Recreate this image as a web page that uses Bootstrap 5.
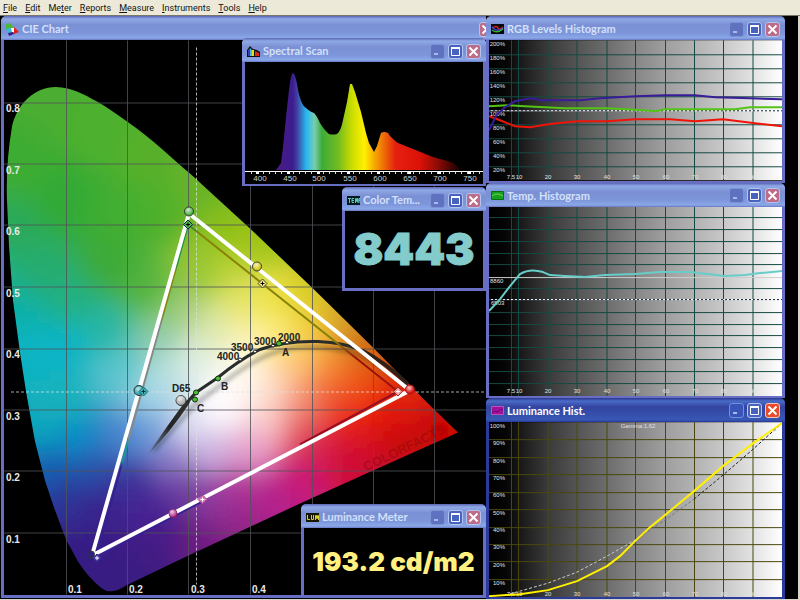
<!DOCTYPE html>
<html lang="en">
<head>
<meta charset="utf-8">
<meta name="viewport" content="width=device-width, initial-scale=1">
<title>Color Analyzer</title>
<link href="https://cdn.jsdelivr.net/npm/bootstrap@5.3.0/dist/css/bootstrap.min.css" rel="stylesheet">
<style>
  body { background: #000; font-family: Roboto, "Liberation Sans", sans-serif; font-size: 9px; line-height: 14px; }
  .menu-strip { background: #ece9d8; border-bottom: 1px solid #77756c; height: 16px; padding-left: 3px; gap: 8px; flex: none; }
  .menu-strip a { color: #111; }
  .desk { background: #000; border-right: 2px solid #d8d6cc; border-bottom: 1px solid #d8d6cc; }
  .pane-main { flex: 486 1 0; }
  .pane-side { flex: 299 1 0; padding-right: 13px; }
  .win { background: #000; border: solid #686ec4; border-width: 0 3px 2px; border-radius: 6px 6px 0 0; }
  .win-bar { height: 24px; flex: none; margin: 0 -3px; padding: 2px 5px 0; gap: 3px; border-radius: 5px 5px 0 0;
    background: linear-gradient(#5a66b4, #8fa9e6 3px, #7b90d4 9px, #7d95da 17px, #8aa8e8 22px, #6a76c4); }
  .win-name { color: #d3e0fa; font: 700 11px/16px Lato, sans-serif; white-space: nowrap; }
  .win-bar svg { flex: none; }
  .win-active { border-color: #2c3a9c; }
  .win-active .win-bar { background: linear-gradient(#2a3488, #4a6cc8 3px, #3344a0 9px, #3450ac 17px, #3858b4 22px, #26349a); }
  .win-active .win-name { color: #fff; }
  .ctl { width: 15px; height: 15px; padding: 0; border: 1px solid #b4c4f0; border-radius: 3px; background: #4763bd; display: flex; }
  .ctl-min { background: #5f72bf; border-color: #7c92d8; }
  .ctl-close { background: #bc6c88; }
  .win-active .ctl-min { background: #3854b8; border-color: #6f90dc; }
  .win-active .ctl-close { background: #e84c28; border-color: #f0c8c0; }
  .ctl-set { gap: 3px; }
  .win-chart { border-bottom-width: 3px; margin: 0 -13px 1px 1px; }
  .plot { flex: 1 1 0; min-height: 0; width: 100%; display: block; }
  .at-spectral { left: 242px; right: 0; top: 22px; }
  .at-temp { left: 342px; right: 0; top: 171px; }
  .at-lum { left: 301px; right: 0; bottom: 1px; }
  .read-temp { color: #84cccc; font: 900 44px/77px Inter, sans-serif; -webkit-text-stroke: 1px #84cccc; }
  .read-lum { color: #fff080; font: 900 26px/67px Inter, sans-serif; }
  .at-temp, .at-lum { border-bottom-width: 3px; }
  svg text { font-family: "Liberation Sans", Arial, sans-serif; }
  .axis-txt { font-size: 10px; font-weight: 700; fill: #e8e8e8; }
  .locus-txt { font-size: 10px; font-weight: 700; fill: #222; }
  .wave-txt { font-size: 8px; fill: #d0d0d0; text-anchor: middle; }
  .tiny-txt { font-size: 6px; font-weight: 400; fill: #e0e0e0; }
</style>
<script src="https://cdn.jsdelivr.net/npm/bootstrap@5.3.0/dist/js/bootstrap.bundle.min.js"></script>
</head>
<body class="d-flex flex-column min-vh-100 m-0">

<svg width="0" height="0" class="position-absolute" aria-hidden="true">
  <defs>
    <symbol id="g-min" viewBox="0 0 13 13"><path d="M3 9h4" stroke="#a9b9ec" stroke-width="2"/></symbol>
    <symbol id="g-max" viewBox="0 0 13 13"><path d="M2.500 3v7.500h8V3z" fill="none" stroke="#fff"/><path d="M2 3h9" stroke="#fff" stroke-width="2"/></symbol>
    <symbol id="g-close" viewBox="0 0 13 13"><path d="M2.500 2.500l8 8M10.500 2.500l-8 8" stroke="#fff" stroke-width="2"/></symbol>
    <linearGradient id="ramp">
      <stop offset="0" stop-color="#000"/><stop offset=".06" stop-color="#060606"/>
      <stop offset=".1" stop-color="#161616"/><stop offset=".2" stop-color="#3a3a3a"/>
      <stop offset=".3" stop-color="#545454"/><stop offset=".4" stop-color="#6c6c6c"/>
      <stop offset=".5" stop-color="#868686"/><stop offset=".6" stop-color="#9e9e9e"/>
      <stop offset=".7" stop-color="#b2b2b2"/><stop offset=".8" stop-color="#c8c8c8"/>
      <stop offset=".9" stop-color="#e2e2e2"/><stop offset="1" stop-color="#fff"/>
    </linearGradient>
  </defs>
</svg>

<nav class="menu-strip d-flex align-items-center" aria-label="Menu">
  <a class="text-decoration-none" href="#"><u>F</u>ile</a>
  <a class="text-decoration-none" href="#"><u>E</u>dit</a>
  <a class="text-decoration-none" href="#">Me<u>t</u>er</a>
  <a class="text-decoration-none" href="#"><u>R</u>eports</a>
  <a class="text-decoration-none" href="#"><u>M</u>easure</a>
  <a class="text-decoration-none" href="#"><u>I</u>nstruments</a>
  <a class="text-decoration-none" href="#"><u>T</u>ools</a>
  <a class="text-decoration-none" href="#"><u>H</u>elp</a>
</nav>

<main class="desk d-flex flex-grow-1">
  <div class="pane-main position-relative overflow-hidden d-flex">

    <section class="win win-chart d-flex flex-column flex-grow-1">
      <header class="win-bar d-flex align-items-center">
        <svg width="13" height="13" viewBox="0 0 13 13"><path d="M0 1l4-1 4 5-3 2-5-1z" fill="#4cb838"/><path d="M0 6l5-1 1 4-4 1z" fill="#38b8d8"/><path d="M5 5l4 0 1 4-4 0z" fill="#fff"/><path d="M8 4l5 5-5 2z" fill="#e42018"/><path d="M2 10l5-1 1 2-5 2z" fill="#342088"/></svg>
        <span class="win-name">CIE Chart</span>
        <span class="ctl-set d-flex ms-auto"><button class="ctl ctl-close" type="button" aria-label="Close"><svg width="13" height="13"><use href="#g-close"/></svg></button></span>
      </header>
      <svg class="plot" viewBox="4 40 492 554" role="img" aria-label="CIE chromaticity chart">
        <defs>
          <clipPath id="gamut"><path d="M7 200C6 175 8 150 12 126C17 104 34 86.500 56 86.500C72 87 84 94 97 101C108 107 117 114 127 121C152 138 172 158 190 173L250 228L313 288L373 347L425 400L458 432L373 470L300 503L240 531L180 559L126 585Q111 595 102 588Q88 577 78 561L66 539L54 507L45 480L35 441L26 391L20 352L13 300L9 245Z"/></clipPath>
          <filter id="soft" x="0" y="0" width="1" height="1"><feGaussianBlur stdDeviation="11"/></filter>
          <filter id="shade" x="-10%" y="-10%" width="120%" height="120%"><feGaussianBlur stdDeviation="2"/></filter>
          <linearGradient id="edgeL" gradientUnits="userSpaceOnUse" x1="188" y1="224" x2="96" y2="557">
            <stop offset="0" stop-color="#1a9040"/><stop offset=".12" stop-color="#1a9040"/><stop offset=".14" stop-color="#8a8410"/><stop offset=".26" stop-color="#8a8410"/><stop offset=".3" stop-color="#888"/><stop offset=".64" stop-color="#888"/><stop offset=".66" stop-color="#189890"/><stop offset=".71" stop-color="#189890"/><stop offset=".73" stop-color="#342090"/><stop offset="1" stop-color="#342090"/>
          </linearGradient>
          <linearGradient id="edgeR" gradientUnits="userSpaceOnUse" x1="188" y1="224" x2="398" y2="391">
            <stop offset="0" stop-color="#1a9040"/><stop offset=".06" stop-color="#8a8008"/><stop offset=".7" stop-color="#848008"/><stop offset=".8" stop-color="#981008"/><stop offset="1" stop-color="#a01010"/>
          </linearGradient>
          <linearGradient id="tail" gradientUnits="userSpaceOnUse" x1="148" y1="453" x2="190" y2="400"><stop offset="0" stop-color="#444" stop-opacity=".3"/><stop offset=".5" stop-color="#222"/><stop offset="1" stop-color="#333"/></linearGradient>
          <radialGradient id="gloss" cx=".4" cy=".3" r=".6"><stop offset="0" stop-color="#fff" stop-opacity=".75"/><stop offset="1" stop-color="#fff" stop-opacity="0"/></radialGradient>
        </defs>
        <g clip-path="url(#gamut)"><g id="hues" filter="url(#soft)"></g></g>
        <path d="M66.500 40V594M127.500 40V594M188.500 40V594M250.500 40V594M312.500 40V594M373.500 40V594M434.500 40V594M4 102.500H496M4 163.500H496M4 224.500H496M4 286.500H496M4 348.500H496M4 409.500H496M4 470.500H496M4 532.500H496" stroke="#505358" stroke-opacity=".8" fill="none"/>
        <path d="M196.500 47V584M11 391.500H490" stroke="#e0e0e0" stroke-opacity=".75" stroke-dasharray="3 2" fill="none"/>
        <text transform="translate(366 471) rotate(-26)" font-size="13" font-weight="700" fill="#900808" fill-opacity=".5">COLORFACTS</text>

        <path d="M154 450L194 405L224 382Q258 355 284 349Q314 343 354 352Q384 364 408 387" stroke="#000" stroke-opacity=".3" stroke-width="4" fill="none" filter="url(#shade)"/>
        <path d="M148 454Q168 424 186 400L190 402Q170 432 148 454Z" fill="url(#tail)"/>
        <path d="M187 402L196 392L218 377Q240 359 260 349Q286 340 318 341Q344 342 362 350" stroke="#282c2c" stroke-width="3" fill="none"/>
        <path d="M362 350Q386 362 408 384" stroke="#302018" stroke-width="4" fill="none"/>
        <path d="M188 224L96 557" stroke="url(#edgeL)" stroke-width="2"/>
        <path d="M188 224L398 391" stroke="url(#edgeR)" stroke-width="2"/>
        <path d="M98 556L202 501" stroke="#382090" stroke-width="2"/><path d="M300 444L398 391" stroke="#981020" stroke-width="2"/>
        <path d="M189 213L410 390L92 555Z" stroke="#fff" stroke-width="4" stroke-linejoin="round" fill="none"/>

        <g stroke="#333" stroke-width="1">
          <circle cx="189" cy="211" r="4.500" fill="#50b048"/><circle cx="257" cy="266" r="4.500" fill="#d8c810"/>
          <circle cx="410" cy="389" r="4.500" fill="#d81818" stroke="#a01010"/><circle cx="139" cy="390" r="5" fill="#30a8b0"/>
          <circle cx="173" cy="513" r="4" fill="#b83090" stroke="#802060"/><circle cx="91" cy="554" r="3.500" fill="#302080"/>
          <circle cx="181" cy="400" r="5" fill="#aaa"/>
        </g>
        <g fill="url(#gloss)"><circle cx="189" cy="211" r="4"/><circle cx="257" cy="266" r="4"/><circle cx="410" cy="389" r="4"/><circle cx="139" cy="390" r="4"/><circle cx="173" cy="513" r="4"/><circle cx="181" cy="400" r="5"/></g>
        <g stroke-width="1">
          <path d="M188 219.500l4.500 4.500-4.500 4.500-4.500-4.500z" fill="#50b850" stroke="#124"/><path d="M186 224h4M188 222v4" stroke="#000"/>
          <path d="M262.500 278.500l4.500 4.500-4.500 4.500-4.500-4.500z" fill="#f4ec80" stroke="#443"/><path d="M260.500 283h4M262.500 281v4" stroke="#000"/>
          <path d="M398 386.500l4.500 4.500-4.500 4.500-4.500-4.500z" fill="#f09090" stroke="#a03030"/><path d="M396 391h4M398 389v4" stroke="#fff"/>
          <path d="M143.500 386.500l4.500 4.500-4.500 4.500-4.500-4.500z" fill="#40b0b0" stroke="#267"/><path d="M141.500 391h4M143.500 389v4" stroke="#033"/>
          <path d="M202.500 494.500l4.500 4.500-4.500 4.500-4.500-4.500z" fill="#d878b8" stroke="#a04088"/><path d="M200.500 499h4M202.500 497v4" stroke="#fff"/>
          <path d="M97 553.500l4 4-4 4-4-4z" fill="#4838a0" stroke="#383090"/><path d="M95 557.500h4M97 555.500v4" stroke="#fff"/>
        </g>
        <g fill="#48c030" stroke="#103010"><circle cx="196" cy="392" r="2.500"/><circle cx="195" cy="399" r="2.500"/><circle cx="218" cy="378" r="2.500"/><circle cx="279" cy="343" r="2.500"/></g>
        <g fill="#fff" stroke="#222"><circle cx="287" cy="342" r="1.500"/><circle cx="273" cy="345" r="1.500"/><circle cx="255" cy="351" r="1.500"/><circle cx="240" cy="359" r="1.500"/></g>
        <g class="locus-txt"><text x="278" y="340">2000</text><text x="254" y="344">3000</text><text x="231" y="350">3500</text><text x="217" y="359">4000</text><text x="282" y="355">A</text><text x="221" y="389">B</text><text x="197" y="411">C</text><text x="172" y="391">D65</text></g>
        <g class="axis-txt">
          <text x="6" y="111">0.8</text><text x="6" y="173">0.7</text><text x="6" y="234">0.6</text><text x="6" y="296">0.5</text><text x="6" y="357">0.4</text><text x="6" y="419">0.3</text><text x="6" y="480">0.2</text><text x="6" y="542">0.1</text>
          <text x="68" y="592">0.1</text><text x="129" y="592">0.2</text><text x="191" y="592">0.3</text><text x="252" y="592">0.4</text>
        </g>
      </svg>
    </section>

    <section class="win at-spectral position-absolute d-flex flex-column">
      <header class="win-bar d-flex align-items-center">
        <svg width="13" height="11" viewBox="0 0 13 11"><path d="M0 11V4L3 0l3 3 4 1 3 2v5z" fill="#111"/><path d="M1 10V4l2-2v8z" fill="#4038b0"/><path d="M3 2l2 2v6H3z" fill="#40b8e0"/><path d="M5 4h2v6H5z" fill="#e8e020"/><path d="M8 5l4 2v3H8z" fill="#e02818"/></svg>
        <span class="win-name">Spectral Scan</span>
        <span class="ctl-set d-flex ms-auto"><button class="ctl ctl-min" type="button" aria-label="Minimize"><svg width="13" height="13"><use href="#g-min"/></svg></button><button class="ctl" type="button" aria-label="Maximize"><svg width="13" height="13"><use href="#g-max"/></svg></button><button class="ctl ctl-close" type="button" aria-label="Close"><svg width="13" height="13"><use href="#g-close"/></svg></button></span>
      </header>
      <svg class="w-100 d-block" viewBox="245 62 238 122" role="img" aria-label="Spectral power">
        <defs><linearGradient id="spec" gradientUnits="userSpaceOnUse" x1="276" y1="0" x2="460" y2="0">
          <stop offset="0" stop-color="#4a1a80"/><stop offset=".09" stop-color="#3c1c90"/><stop offset=".11" stop-color="#40389c"/><stop offset=".165" stop-color="#28b8f0"/><stop offset=".21" stop-color="#78ccb0"/><stop offset=".25" stop-color="#3cac38"/><stop offset=".34" stop-color="#74bc20"/><stop offset=".41" stop-color="#c8dc00"/><stop offset=".48" stop-color="#fff000"/><stop offset=".53" stop-color="#f8b000"/><stop offset=".6" stop-color="#ec5c08"/><stop offset=".65" stop-color="#e42010"/><stop offset=".78" stop-color="#dc1208"/><stop offset=".88" stop-color="#8c0c04"/><stop offset="1" stop-color="#180000"/>
        </linearGradient></defs>
        <path d="M276 170L281 163L283 147L286 117L289 90Q291 73 293 73Q295 74 297 84Q299 98 303 105Q307 110 314 113Q317 116 320 123Q325 131 329 134Q333 135 337 134Q341 131 343 120L347 102L350 84H352L355 92L361 112L366 133L369 143L374 152L377 146L381 133Q384 131 388 133Q391 138 398 143L413 149L433 157L451 162Q456 164 460 170Z" fill="url(#spec)"/>
        <path d="M245 171.500H483" stroke="#fff"/>
        <path id="waveTicks" stroke="#ddd"/>
        <path d="M256 173h3M287 173h3M317 173h3M347 173h3M377 173h3M408 173h3M438 173h3M468 173h3" stroke="#fff" stroke-width="2"/>
        <g class="wave-txt"><text x="260" y="181">400</text><text x="290" y="181">450</text><text x="319" y="181">500</text><text x="350" y="181">550</text><text x="380" y="181">600</text><text x="410" y="181">650</text><text x="440" y="181">700</text><text x="470" y="181">750</text></g>
      </svg>
    </section>

    <section class="win at-temp position-absolute d-flex flex-column">
      <header class="win-bar d-flex align-items-center">
        <svg width="13" height="9" viewBox="0 0 13 9"><path d="M0 0h13v9H0z" fill="#021c1c"/><path d="M1 2.500h3M2.500 2v5M7 2.500H5v4h2M5 4.500h2M8.500 7V2.500h1v3h1v-3h.500V7M12 7V2.500h1v2h-1" stroke="#58c8c0" fill="none"/></svg>
        <span class="win-name">Color Tem...</span>
        <span class="ctl-set d-flex ms-auto"><button class="ctl ctl-min" type="button" aria-label="Minimize"><svg width="13" height="13"><use href="#g-min"/></svg></button><button class="ctl" type="button" aria-label="Maximize"><svg width="13" height="13"><use href="#g-max"/></svg></button><button class="ctl ctl-close" type="button" aria-label="Close"><svg width="13" height="13"><use href="#g-close"/></svg></button></span>
      </header>
      <output class="read-temp text-center d-block">8443</output>
    </section>

    <section class="win at-lum position-absolute d-flex flex-column">
      <header class="win-bar d-flex align-items-center">
        <svg width="13" height="9" viewBox="0 0 13 9"><path d="M0 0h13v9H0z" fill="#181800"/><path d="M1.500 2v4.500H4M5.500 2v4.500h2V2M9.500 7V2.500h1v3h1v-3h1V7" stroke="#d8d030" fill="none"/></svg>
        <span class="win-name">Luminance Meter</span>
        <span class="ctl-set d-flex ms-auto"><button class="ctl ctl-min" type="button" aria-label="Minimize"><svg width="13" height="13"><use href="#g-min"/></svg></button><button class="ctl" type="button" aria-label="Maximize"><svg width="13" height="13"><use href="#g-max"/></svg></button><button class="ctl ctl-close" type="button" aria-label="Close"><svg width="13" height="13"><use href="#g-close"/></svg></button></span>
      </header>
      <output class="read-lum text-center text-nowrap d-block">193.2 cd/m2</output>
    </section>
  </div>

  <div class="pane-side d-flex flex-column">
    <section class="win d-flex flex-column" style="flex: 166 1 0">
      <header class="win-bar d-flex align-items-center">
        <svg width="13" height="10" viewBox="0 0 13 10"><path d="M0 0h13v10H0z" fill="#080808"/><path d="M1 4q5-3 6 0t5-1" stroke="#e02020" stroke-width="1.500" fill="none"/><path d="M1 3q5 6 11 1" stroke="#4040d0" stroke-width="1.500" fill="none"/><path d="M1 6q5 4 11-1" stroke="#30b030" stroke-width="1.500" fill="none"/></svg>
        <span class="win-name">RGB Levels Histogram</span>
        <span class="ctl-set d-flex ms-auto"><button class="ctl ctl-min" type="button" aria-label="Minimize"><svg width="13" height="13"><use href="#g-min"/></svg></button><button class="ctl" type="button" aria-label="Maximize"><svg width="13" height="13"><use href="#g-max"/></svg></button><button class="ctl ctl-close" type="button" aria-label="Close"><svg width="13" height="13"><use href="#g-close"/></svg></button></span>
      </header>
      <svg class="plot" viewBox="489 40 293 140" role="img" aria-label="RGB levels">
        <path d="M489 40h293v140H489z" fill="url(#ramp)"/>
        <path d="M511.500 40V180M518.500 40V180M548 40V180M577 40V180M607 40V180M635.500 40V180M665.500 40V180M694.500 40V180M723.500 40V180M753 40V180M489 54.500H782M489 68.500H782M489 82.500H782M489 96.500H782M489 124.500H782M489 138.500H782M489 152.500H782M489 166.500H782" stroke="#144a42" fill="none"/>
        <path d="M489 110.500H782" stroke="#fff"/><path d="M489 110.500H782" stroke="#123" stroke-dasharray="2 2"/>
        <g class="tiny-txt" text-anchor="end"><text x="505" y="46">200%</text><text x="505" y="60">180%</text><text x="505" y="74">160%</text><text x="505" y="88">140%</text><text x="505" y="102">120%</text><text x="505" y="116">100%</text><text x="505" y="130">80%</text><text x="505" y="144">60%</text><text x="505" y="158">40%</text><text x="505" y="172">20%</text></g>
        <g class="tiny-txt" text-anchor="middle"><text x="511" y="179">7.5</text><text x="519" y="179">10</text><text x="548" y="179">20</text><text x="577" y="179">30</text><text x="607" y="179">40</text><text x="636" y="179">50</text><text x="666" y="179">60</text><text x="695" y="179">70</text><text x="724" y="179">80</text><text x="753" y="179">90</text></g>
        <g fill="none" stroke-width="2">
          <path d="M489 106L507 105L525 106L565 108H607L645 110L655 111L665 109H735L750 107H782" stroke="#54c414"/>
          <path d="M489 116L500 120L515 126L530 127L548 124L577 121H607L635 119H670L695 121L723 119L755 123L782 126" stroke="#f01408"/>
          <path d="M489 130L497 114L505 107L515 101L525 99L533 98L540 100H580L600 98L635 96L665 95L695 95L715 97L750 98L782 99" stroke="#3a1c98"/>
        </g>
      </svg>
    </section>

    <section class="win d-flex flex-column" style="flex: 215 1 0">
      <header class="win-bar d-flex align-items-center">
        <svg width="13" height="9" viewBox="0 0 13 9"><path d="M.5.5h12v8H.5z" fill="#18a020" stroke="#087010"/><path d="M1 5q5-4 11 0" stroke="#70d850" fill="none"/></svg>
        <span class="win-name">Temp. Histogram</span>
        <span class="ctl-set d-flex ms-auto"><button class="ctl ctl-min" type="button" aria-label="Minimize"><svg width="13" height="13"><use href="#g-min"/></svg></button><button class="ctl" type="button" aria-label="Maximize"><svg width="13" height="13"><use href="#g-max"/></svg></button><button class="ctl ctl-close" type="button" aria-label="Close"><svg width="13" height="13"><use href="#g-close"/></svg></button></span>
      </header>
      <svg class="plot" viewBox="489 206 293 189" role="img" aria-label="Color temperature">
        <path d="M489 206h293v189H489z" fill="url(#ramp)"/>
        <path d="M511.500 206V395M518.500 206V395M548 206V395M577 206V395M607 206V395M635.500 206V395M665.500 206V395M694.500 206V395M723.500 206V395M753 206V395M489 216.500H782M489 228.500H782M489 240.500H782M489 252.500H782M489 263.500H782M489 287.500H782M489 311.500H782M489 323.500H782M489 334.500H782M489 346.500H782M489 358.500H782M489 370.500H782M489 382.500H782" stroke="#144a42" fill="none"/>
        <path d="M489 276.500H782" stroke="#ccc"/>
        <path d="M489 298.500H782" stroke="#fff"/><path d="M489 298.500H782" stroke="#123" stroke-dasharray="2 2"/>
        <g class="tiny-txt"><text x="490" y="282">8860</text><text x="491" y="304">6503</text></g>
        <g class="tiny-txt" text-anchor="middle"><text x="511" y="392">7.5</text><text x="519" y="392">10</text><text x="548" y="392">20</text><text x="577" y="392">30</text><text x="607" y="392">40</text><text x="636" y="392">50</text><text x="666" y="392">60</text><text x="695" y="392">70</text><text x="724" y="392">80</text><text x="753" y="392">90</text></g>
        <path d="M489 310L500 298L510 285L520 273Q530 267 543 271L550 274L565 275L585 276L605 274L635 273L660 271H690L725 275L745 274L760 272L782 270" stroke="#68ccc8" stroke-width="2" fill="none"/>
      </svg>
    </section>

    <section class="win win-active d-flex flex-column" style="flex: 201 1 0">
      <header class="win-bar d-flex align-items-center">
        <svg width="13" height="9" viewBox="0 0 13 9"><path d="M.5.5h12v8H.5z" fill="#a01098" stroke="#c050b8"/><path d="M1 7l3-2 3 1 3-3 2 1" stroke="#700870" fill="none"/></svg>
        <span class="win-name">Luminance Hist.</span>
        <span class="ctl-set d-flex ms-auto"><button class="ctl ctl-min" type="button" aria-label="Minimize"><svg width="13" height="13"><use href="#g-min"/></svg></button><button class="ctl" type="button" aria-label="Maximize"><svg width="13" height="13"><use href="#g-max"/></svg></button><button class="ctl ctl-close" type="button" aria-label="Close"><svg width="13" height="13"><use href="#g-close"/></svg></button></span>
      </header>
      <svg class="plot" viewBox="489 421 293 175" role="img" aria-label="Luminance">
        <path d="M489 421h293v175H489z" fill="url(#ramp)"/>
        <path d="M511.500 421V596M518.500 421V596M548 421V596M577 421V596M607 421V596M635.500 421V596M665.500 421V596M694.500 421V596M723.500 421V596M753 421V596M489 438.500H782M489 456.500H782M489 473.500H782M489 491.500H782M489 508.500H782M489 526.500H782M489 543.500H782M489 560.500H782M489 578.500H782" stroke="#48480e" fill="none"/>
        <g class="tiny-txt" text-anchor="end"><text x="505" y="427">100%</text><text x="505" y="444">90%</text><text x="505" y="462">80%</text><text x="505" y="479">70%</text><text x="505" y="496">60%</text><text x="505" y="514">50%</text><text x="505" y="531">40%</text><text x="505" y="548">30%</text><text x="505" y="566">20%</text><text x="505" y="584">10%</text></g>
        <g class="tiny-txt" text-anchor="middle"><text x="638" y="427">Gamma:1.62</text><text x="511" y="595">7.5</text><text x="519" y="595">10</text><text x="548" y="595">20</text><text x="577" y="595">30</text><text x="607" y="595">40</text><text x="636" y="595">50</text><text x="666" y="595">60</text><text x="695" y="595">70</text><text x="724" y="595">80</text><text x="753" y="595">90</text></g>
        <g fill="none" stroke-dasharray="3 2"><path d="M505 594L520 590L548 582L577 571L607 555L635 539" stroke="#ccc"/><path d="M635 539L665 519L694 498" stroke="#777"/><path d="M694 498L723 474L752 449L782 422" stroke="#222"/></g>
        <path d="M489 595L520 593L548 589L577 580L607 565L620 555L635 540L650 526L665 514L694 490L723 465L752 443L782 422" stroke="#fff000" stroke-width="2" fill="none"/>
      </svg>
    </section>
  </div>
</main>

<script>
  // Hue samples across the chromaticity diagram: x, y, red, green, blue.
  const samples = [
    [50,90,76,174,48],[20,160,62,172,50],[100,130,78,176,46],[150,160,88,176,44],[66,200,50,170,52],[15,230,44,170,90],[120,210,66,174,48],[160,210,78,176,44],
    [200,190,106,180,40],[110,265,62,170,56],[150,290,84,180,60],[40,270,38,172,110],[70,300,34,176,130],[20,310,16,176,170],[66,345,8,180,200],[30,350,10,180,196],
    [105,330,40,182,165],[120,370,90,196,206],[60,400,24,180,188],[40,425,16,168,190],[75,440,10,140,200],[50,470,20,90,176],[90,470,40,80,170],[65,500,46,50,150],
    [100,510,58,32,138],[80,550,54,28,132],[120,570,56,26,130],[150,560,64,30,130],[130,480,58,46,150],[125,440,70,130,205],[150,430,112,160,218],[155,395,168,216,232],
    [160,340,140,202,170],[170,370,190,226,224],[180,310,158,204,120],[195,360,226,240,230],[220,400,255,252,255],[240,370,255,252,240],[210,330,222,232,176],[200,270,150,198,50],
    [225,230,142,192,24],[260,240,160,196,20],[230,270,188,210,50],[240,300,232,230,110],[270,300,240,228,70],[280,330,254,236,120],[250,340,254,244,180],[300,300,222,208,40],
    [310,330,244,206,50],[340,320,210,160,40],[300,360,254,200,120],[330,365,246,140,50],[365,350,206,104,20],[360,385,242,80,16],[330,395,240,90,50],[400,390,222,40,8],
    [390,410,230,20,10],[440,430,198,6,6],[400,440,200,8,14],[350,420,232,30,20],[350,460,206,10,50],[300,400,244,150,120],[270,390,255,226,206],[270,420,252,206,206],
    [300,430,226,80,90],[320,450,214,30,80],[300,480,200,24,120],[250,450,232,160,205],[240,490,176,50,150],[270,500,180,34,140],[210,450,206,180,224],[190,430,222,220,244],
    [175,460,140,120,196],[180,490,106,60,160],[150,510,70,34,148],[215,500,144,56,156],[200,540,110,28,128],[240,520,146,36,136],[160,530,70,28,136],
    [440,350,206,90,20],[480,400,206,30,8],[330,250,160,180,30],[250,180,110,184,40],[110,60,76,174,48],[490,450,196,6,6],[400,500,190,10,80],[300,540,170,34,140],
    [-5,280,30,176,140],[-5,380,10,176,190],[10,460,14,130,190],[220,410,255,252,255],[230,390,255,252,250]
  ];
  const cell = 10, hues = document.getElementById('hues'), ns = 'http://www.w3.org/2000/svg';
  for (let y = 50; y < 630; y += cell) {
    for (let x = -40; x < 520; x += cell) {
      let total = 0, mix = [0, 0, 0];
      for (const [sx, sy, ...rgb] of samples) {
        const d = (sx - x - 5) ** 2 + (sy - y - 5) ** 2 + 450, w = 1 / (d * d * d);
        total += w;
        rgb.forEach((v, i) => mix[i] += v * w);
      }
      const r = document.createElementNS(ns, 'rect');
      r.setAttribute('x', x); r.setAttribute('y', y);
      r.setAttribute('width', cell + 1); r.setAttribute('height', cell + 1);
      r.setAttribute('fill', `rgb(${mix.map(v => Math.round(v / total)).join()})`);
      hues.appendChild(r);
    }
  }
  let ticks = '';
  for (let x = 251; x < 483; x += 6) ticks += `M${x}.5 171v3`;
  document.getElementById('waveTicks').setAttribute('d', ticks);
</script>
</body>
</html>
